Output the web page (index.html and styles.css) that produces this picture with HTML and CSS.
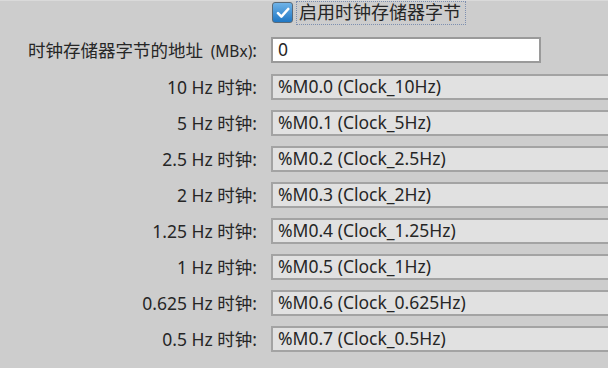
FILE: index.html
```html
<!DOCTYPE html>
<html>
<head>
    <link rel="stylesheet" href="styles.css">
</head>
<body>
    <div class="panel">
        <div class="enableRow">
            <span class="checkbox">
                <svg width="14" height="14" viewBox="0 0 14 14"><path d="M2 7.2 L5.4 10.6 L12.2 3" fill="none" stroke="#ffffff" stroke-width="2.6" stroke-linecap="round" stroke-linejoin="round"/></svg>
            </span>
            <span class="enableLabel">启用时钟存储器字节</span>
        </div>

        <div class="grid">
            <label class="rowLabel">时钟存储器字节的地址 <span class="unit">(MBx)</span>:</label>
            <div class="addrField">0</div>

            <label class="rowLabel">10 Hz 时钟:</label>
            <div class="field">%M0.0 (Clock_10Hz)</div>

            <label class="rowLabel">5 Hz 时钟:</label>
            <div class="field">%M0.1 (Clock_5Hz)</div>

            <label class="rowLabel">2.5 Hz 时钟:</label>
            <div class="field">%M0.2 (Clock_2.5Hz)</div>

            <label class="rowLabel">2 Hz 时钟:</label>
            <div class="field">%M0.3 (Clock_2Hz)</div>

            <label class="rowLabel">1.25 Hz 时钟:</label>
            <div class="field">%M0.4 (Clock_1.25Hz)</div>

            <label class="rowLabel">1 Hz 时钟:</label>
            <div class="field">%M0.5 (Clock_1Hz)</div>

            <label class="rowLabel">0.625 Hz 时钟:</label>
            <div class="field">%M0.6 (Clock_0.625Hz)</div>

            <label class="rowLabel">0.5 Hz 时钟:</label>
            <div class="field">%M0.7 (Clock_0.5Hz)</div>
        </div>
    </div>
</body>
</html>
```

FILE: styles.css
```css
body {
    margin: 0;
    padding: 0;
    background-color: #cdcdcd;
    font-family: "Noto Sans", "Noto Sans CJK SC", sans-serif;
    color: #262626;
}
.panel {
    width: 608px;
    height: 368px;
    overflow: hidden;
    border-top: 1px solid #dadada;
    box-sizing: border-box;
}
.enableRow {
    display: flex;
    align-items: center;
    height: 23px;
    padding-left: 272px;
    margin-bottom: 13px;
}
.checkbox {
    width: 19px;
    height: 19px;
    border: 1px solid #5a6a78;
    border-radius: 3px;
    background: linear-gradient(#6fb3e8, #1f77c4);
    display: flex;
    align-items: center;
    justify-content: center;
}
.enableLabel {
    margin-left: 3px;
    padding: 0 4px 0 2px;
    height: 22px;
    line-height: 21px;
    font-size: 18px;
    border: 1px dotted #7d8fb0;
}
.grid {
    display: grid;
    grid-template-columns: 257px 347px;
    column-gap: 14px;
    row-gap: 10px;
}
.rowLabel {
    text-align: right;
    font-size: 17.5px;
    line-height: 26px;
    white-space: nowrap;
}
.unit {
    font-size: 15.5px;
    margin-left: 3px;
}
.addrField, .field {
    height: 26px;
    box-sizing: border-box;
    border: 2px solid #a3a3a3;
    padding-left: 5px;
    font-size: 17.5px;
    line-height: 21px;
    white-space: nowrap;
}
.addrField {
    width: 270px;
    background: #ffffff;
    border-color: #9a9a9a;
}
.field {
    background: #e1e1e1;
    border-right: none;
}
```
